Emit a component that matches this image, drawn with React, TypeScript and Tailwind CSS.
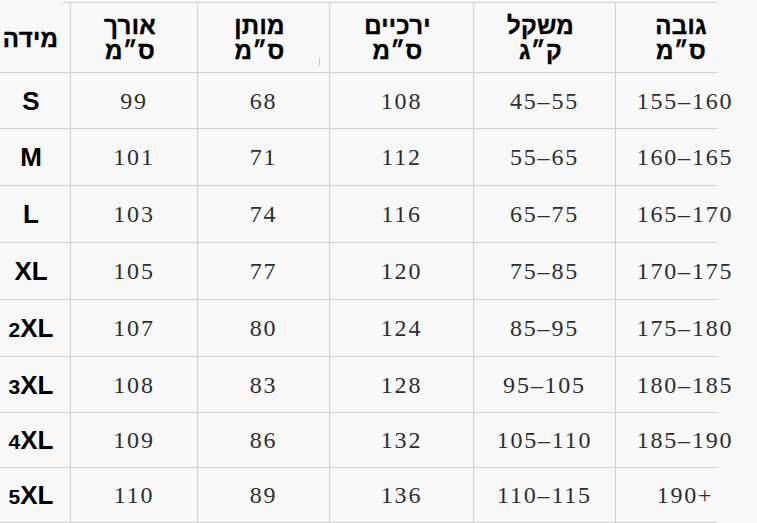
const headers: { top: string; bottom?: string }[] = [
  { top: "מידה" },
  { top: "אורך", bottom: "ס״מ" },
  { top: "מותן", bottom: "ס״מ" },
  { top: "ירכיים", bottom: "ס״מ" },
  { top: "משקל", bottom: "ק״ג" },
  { top: "גובה", bottom: "ס״מ" },
];

const rows = [
  { size: "S", n: "", vals: ["99", "68", "108", "45–55", "155–160"], h: "h-[56px]" },
  { size: "M", n: "", vals: ["101", "71", "112", "55–65", "160–165"], h: "h-[57px]" },
  { size: "L", n: "", vals: ["103", "74", "116", "65–75", "165–170"], h: "h-[57px]" },
  { size: "XL", n: "", vals: ["105", "77", "120", "75–85", "170–175"], h: "h-[57px]" },
  { size: "XL", n: "2", vals: ["107", "80", "124", "85–95", "175–180"], h: "h-[57px]" },
  { size: "XL", n: "3", vals: ["108", "83", "128", "95–105", "180–185"], h: "h-[56px]" },
  { size: "XL", n: "4", vals: ["109", "86", "132", "105–110", "185–190"], h: "h-[55px]" },
  { size: "XL", n: "5", vals: ["110", "89", "136", "110–115", "190+"], h: "h-[55px]" },
];

const widths = ["w-[71px]", "w-[127px]", "w-[132px]", "w-[144px]", "w-[142px]", "w-[138px]"];

function Cell({ i, children }: { i: number; children: React.ReactNode }) {
  return (
    <div
      className={`${widths[i]} shrink-0 flex flex-col items-center justify-center ${
        i < 5 ? "border-r border-[#cfcfcf]" : ""
      }`}
    >
      {children}
    </div>
  );
}

export default function App() {
  return (
    <div className="w-[757px] h-[523px] overflow-hidden bg-[#f8f8f8] pt-[2px]">
      {/* top rule, starts a bit left of the first column line */}
      <div className="ml-[62px] w-[655px] border-t border-[#cfcfcf]" />

      {/* header */}
      <div className="flex w-[717px] h-[70px] border-b border-[#cfcfcf] font-['Liberation_Sans',sans-serif] font-bold text-[24px] text-black">
        {headers.map((h, i) => (
          <Cell key={i} i={i}>
            <div className="relative w-full h-full flex flex-col items-center justify-center leading-[25px] [unicode-bidi:bidi-override] tracking-[0.3px] [-webkit-text-stroke:0.4px_black]" dir="ltr">
              <span className={i === 0 ? "pr-[9px] pt-[1px]" : "pr-[8px]"}>{h.top}</span>
              {h.bottom && <span className="pr-[8px]">{h.bottom}</span>}
              {i === 2 && (
                <span className="absolute right-[9px] top-[55px] w-px h-[8px] bg-[#c4c4c4]" />
              )}
            </div>
          </Cell>
        ))}
      </div>

      {/* body */}
      {rows.map((r, ri) => (
        <div key={ri} className={`flex w-[717px] ${r.h} border-b border-[#cfcfcf]`}>
          <Cell i={0}>
            <span className="pr-[8px] font-['Liberation_Sans',sans-serif] font-bold text-[26px] leading-none text-black">
              {r.n && <span className="text-[21px]">{r.n}</span>}
              {r.size}
            </span>
          </Cell>
          {r.vals.map((v, vi) => (
            <Cell key={vi} i={vi + 1}>
              <span className="font-['Liberation_Serif',serif] text-[24px] tracking-[1.8px] leading-none text-[#2e2e2e]">
                {v}
              </span>
            </Cell>
          ))}
        </div>
      ))}

      {/* start of the next row, cut off at the bottom */}
      <div className="flex w-[717px] h-[20px]">
        {widths.map((_, i) => (
          <Cell key={i} i={i}>
            {null}
          </Cell>
        ))}
      </div>
    </div>
  );
}
